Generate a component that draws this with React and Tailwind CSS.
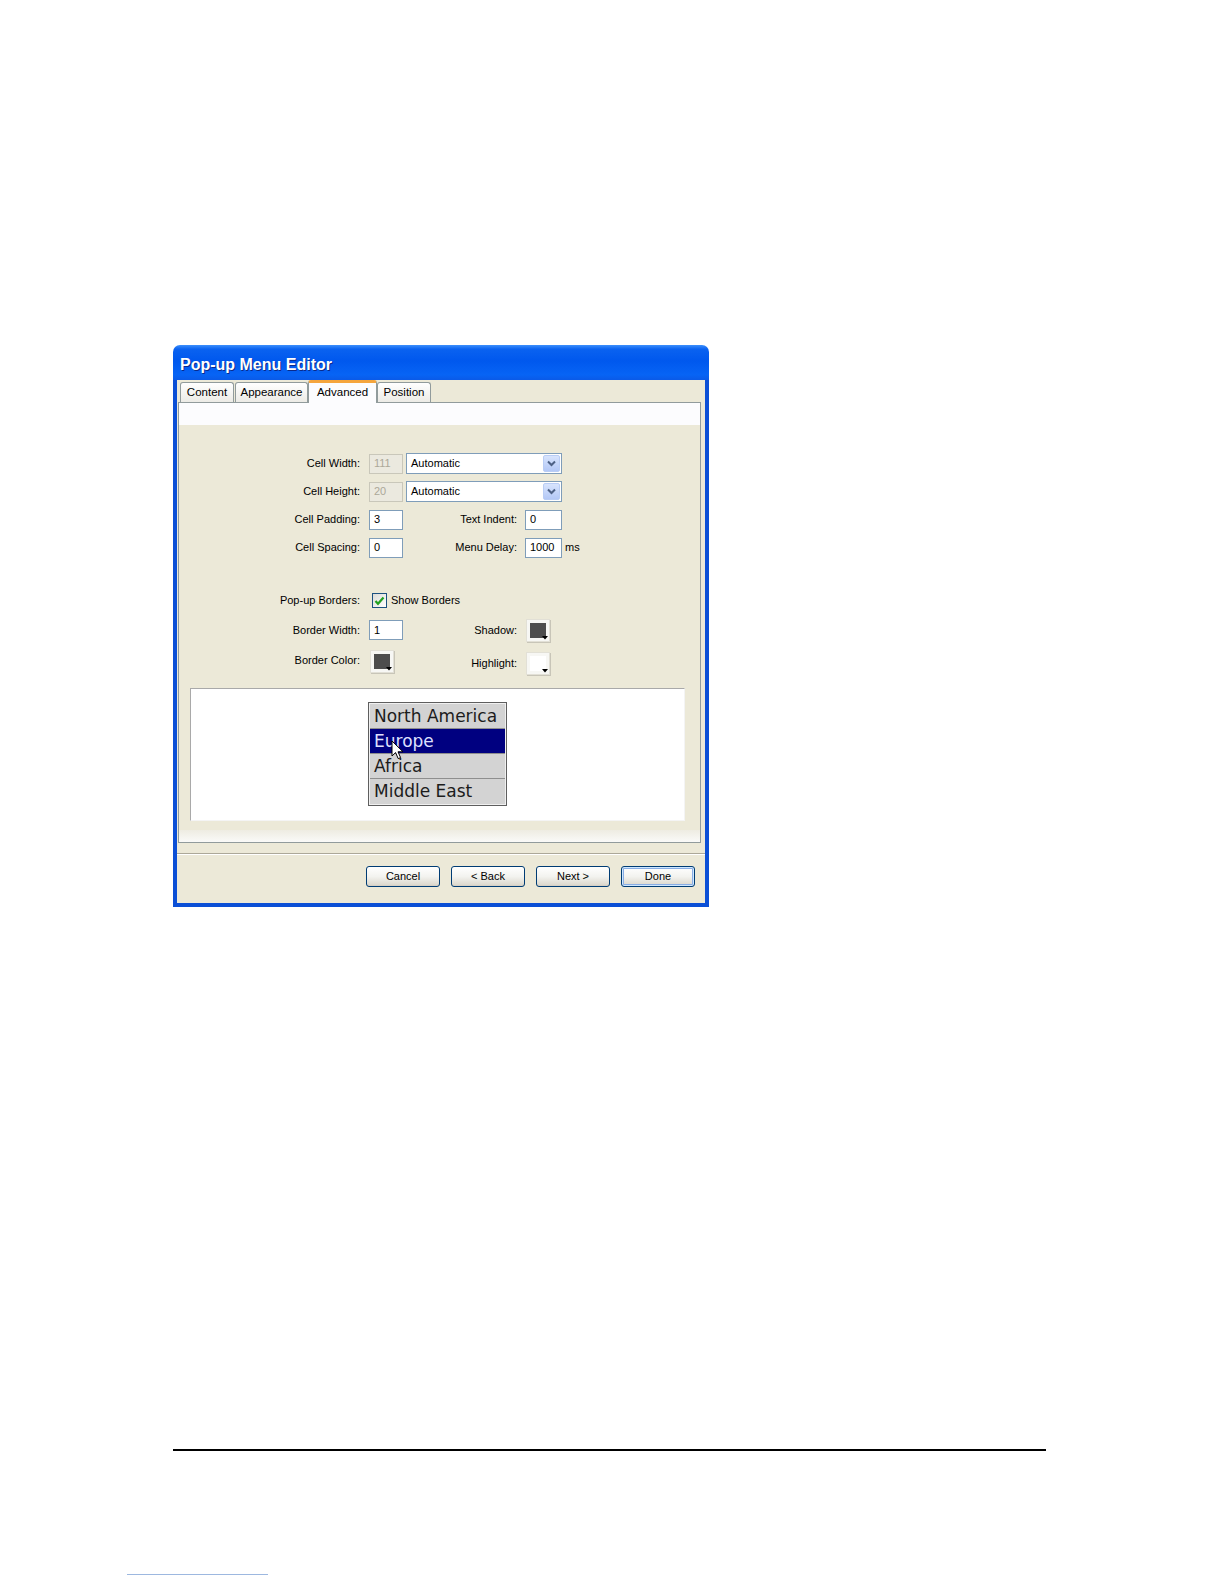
import React from "react";

const Label = ({ children, className = "" }) => (
  <div className={`text-right text-[11px] leading-none text-black ${className}`}>{children}</div>
);

const TextBox = ({ value, disabled, w = "w-[34px]", h = "h-[20px]" }) => (
  <div
    className={`${w} ${h} flex items-center pl-[4px] text-[11px] leading-none border ${
      disabled ? "bg-[#ebe9df] border-[#c9c7ba] text-[#aca899]" : "bg-white border-[#7f9db9] text-black"
    }`}
  >
    {value}
  </div>
);

const Select = ({ value }) => (
  <div className="w-[156px] h-[21px] ml-[3px] flex items-center justify-between bg-white border border-[#7f9db9] pl-[4px] pr-[1px] text-[11px] text-black">
    <span>{value}</span>
    <div className="w-[17px] h-[17px] rounded-[2px] bg-gradient-to-b from-[#d8e4fd] to-[#b3c8f6] border border-[#b9cdf5] flex items-center justify-center">
      <svg width="9" height="7" viewBox="0 0 9 7">
        <path d="M1 1.5 L4.5 5 L8 1.5" fill="none" stroke="#4d6185" strokeWidth="2" />
      </svg>
    </div>
  </div>
);

const Swatch = ({ color }) => (
  <div className="relative w-[24px] h-[23px] bg-[#f7f7f4] border border-[#e2e0d6] shadow-[1px_1px_0_#c8c5b8]">
    <div className={`absolute left-[3px] top-[3px] w-[16px] h-[15px] ${color}`} />
    <svg className="absolute right-[1px] bottom-[1px]" width="6" height="4" viewBox="0 0 6 4">
      <path d="M0 0 H6 L3 3.5 Z" fill="#000" />
    </svg>
  </div>
);

const Tab = ({ children, className = "" }) => (
  <div
    className={`h-[20px] flex items-center justify-center text-[11.5px] text-black border border-b-0 border-[#919b9c] rounded-t-[3px] bg-gradient-to-b from-white to-[#ecebe6] ${className}`}
  >
    {children}
  </div>
);

const Button = ({ children, focused }) => (
  <div
    className={`w-[74px] h-[21px] rounded-[3px] border border-[#003c74] bg-gradient-to-b from-white via-[#f3f3ef] to-[#d9d5ca] flex items-center justify-center text-[11px] text-black ${
      focused ? "shadow-[inset_0_0_0_1px_#cee7ff,inset_0_0_0_2px_#89ade4]" : "shadow-[inset_0_-1px_0_#d6d0c5]"
    }`}
  >
    {children}
  </div>
);

const MenuItem = ({ children, active, last }) => (
  <div
    className={`h-[25px] flex items-center pl-[4px] text-[17px] leading-none ${
      active ? "bg-[#000080] text-[#dfe0ff]" : "bg-[#d3d3d3] text-[#1c1c1c]"
    } ${last ? "" : "border-b border-[#8e8e8e]"}`}
  >
    {children}
  </div>
);

export default function App() {
  return (
    <div className="w-[1224px] h-[1584px] bg-white font-['Liberation_Sans',Arial,sans-serif] overflow-hidden">
      <div className="pt-[345px] pl-[173px]">
        {/* dialog */}
        <div className="w-[536px]">
          <div className="h-[35px] rounded-t-[7px] bg-[linear-gradient(to_bottom,#3c8ffc_0%,#0a62f0_12%,#0058ee_45%,#0764f5_85%,#0a5ae8_100%)] flex items-center pl-[7px] pt-[4px]">
            <span className="text-white font-bold text-[16px] [text-shadow:1px_1px_0_#0a2a8a]">Pop-up Menu Editor</span>
          </div>
          <div className="bg-[#ece9d8] border-x-4 border-b-4 border-[#0b4fd6]">
            {/* tabs */}
            <div className="h-[22px] flex items-end pl-[3px]">
              <Tab className="w-[54px]">Content</Tab>
              <Tab className="w-[73px] ml-px">Appearance</Tab>
              <div className="w-[69px] h-[23px] -mb-px relative z-10 flex items-start justify-center pt-px text-[11.5px] text-black bg-[#fcfcfe] border-x border-[#919b9c] border-t-[3px] border-t-[#f5a53d] rounded-t-[3px]">
                Advanced
              </div>
              <Tab className="w-[54px]">Position</Tab>
            </div>
            {/* panel */}
            <div className="ml-px mr-[4px] h-[441px] border border-[#919b9c] bg-[#fcfcfe] flex flex-col">
              <div className="h-[22px]" />
              <div className="h-[405px] bg-[#ece9d8] pt-[28px] flex flex-col">
                <div className="flex items-center h-[21px]">
                  <Label className="w-[181px]">Cell Width:</Label>
                  <div className="ml-[9px]"><TextBox value="111" disabled /></div>
                  <Select value="Automatic" />
                </div>
                <div className="flex items-center h-[21px] mt-[7px]">
                  <Label className="w-[181px]">Cell Height:</Label>
                  <div className="ml-[9px]"><TextBox value="20" disabled /></div>
                  <Select value="Automatic" />
                </div>
                <div className="flex items-center h-[21px] mt-[7px]">
                  <Label className="w-[181px]">Cell Padding:</Label>
                  <div className="ml-[9px]"><TextBox value="3" /></div>
                  <Label className="w-[114px]">Text Indent:</Label>
                  <div className="ml-[8px]"><TextBox value="0" w="w-[37px]" /></div>
                </div>
                <div className="flex items-center h-[21px] mt-[7px]">
                  <Label className="w-[181px]">Cell Spacing:</Label>
                  <div className="ml-[9px]"><TextBox value="0" /></div>
                  <Label className="w-[114px]">Menu Delay:</Label>
                  <div className="ml-[8px]"><TextBox value="1000" w="w-[37px]" /></div>
                  <span className="ml-[3px] text-[11px] text-black">ms</span>
                </div>
                <div className="flex items-center h-[21px] mt-[32px]">
                  <Label className="w-[181px]">Pop-up Borders:</Label>
                  <div className="ml-[12px] w-[15px] h-[15px] border border-[#1c5180] bg-gradient-to-br from-[#dcdcd7] to-white flex items-center justify-center">
                    <svg width="11" height="10" viewBox="0 0 11 10">
                      <path d="M1.5 5 L4 7.8 L9.5 1.5" fill="none" stroke="#21a121" strokeWidth="2.2" />
                    </svg>
                  </div>
                  <span className="ml-[4px] text-[11px] text-black">Show Borders</span>
                </div>
                <div className="flex items-center h-[22px] mt-[8px]">
                  <Label className="w-[181px]">Border Width:</Label>
                  <div className="ml-[9px]"><TextBox value="1" /></div>
                  <Label className="w-[114px]">Shadow:</Label>
                  <div className="ml-[9px]"><Swatch color="bg-[#4d4d4d]" /></div>
                </div>
                <div className="flex items-start h-[24px] mt-[9px]">
                  <Label className="w-[181px] mt-[5px]">Border Color:</Label>
                  <div className="ml-[10px]"><Swatch color="bg-[#4d4d4d]" /></div>
                  <Label className="w-[123px] mt-[8px]">Highlight:</Label>
                  <div className="ml-[9px] mt-[2px]"><Swatch color="bg-white" /></div>
                </div>
                {/* preview */}
                <div className="mt-[14px] ml-[11px] w-[495px] h-[133px] bg-white border-t border-l border-[#a9a9a9] border-r border-b border-r-[#f4f4f4] border-b-[#f4f4f4] pt-[13px] pl-[177px]">
                  <div className="relative w-[139px] border border-[#5e5e5e] bg-[#d3d3d3] p-px font-['DejaVu_Sans',Verdana,sans-serif] shadow-[inset_0_0_0_1px_#f0f0f0]">
                    <MenuItem>North America</MenuItem>
                    <MenuItem active>Europe</MenuItem>
                    <MenuItem>Africa</MenuItem>
                    <MenuItem last>Middle East</MenuItem>
                    <svg className="absolute left-[22px] top-[37px]" width="13" height="20" viewBox="0 0 13 20">
                      <path d="M1 1 L1 16 L4.6 12.6 L7.2 18.6 L9.6 17.6 L7 11.8 L12 11.8 Z" fill="#fff" stroke="#000" strokeWidth="1" strokeLinejoin="round" />
                    </svg>
                  </div>
                </div>
              </div>
              <div className="h-[12px] bg-gradient-to-b from-[#eeece2] to-[#fafaf8]" />
            </div>
            {/* separator */}
            <div className="mt-[10px] h-[2px] border-t border-[#aca899] border-b border-b-white" />
            <div className="mt-[11px] h-[21px] flex gap-[11px] pl-[189px]">
              <Button>Cancel</Button>
              <Button>&lt; Back</Button>
              <Button>Next &gt;</Button>
              <Button focused>Done</Button>
            </div>
            <div className="h-[16px]" />
          </div>
        </div>
      </div>
      <div className="ml-[173px] mt-[542px] w-[873px] h-[2px] bg-black" />
      <div className="ml-[127px] mt-[123px] w-[141px] h-px bg-[#9db8e0]" />
    </div>
  );
}
